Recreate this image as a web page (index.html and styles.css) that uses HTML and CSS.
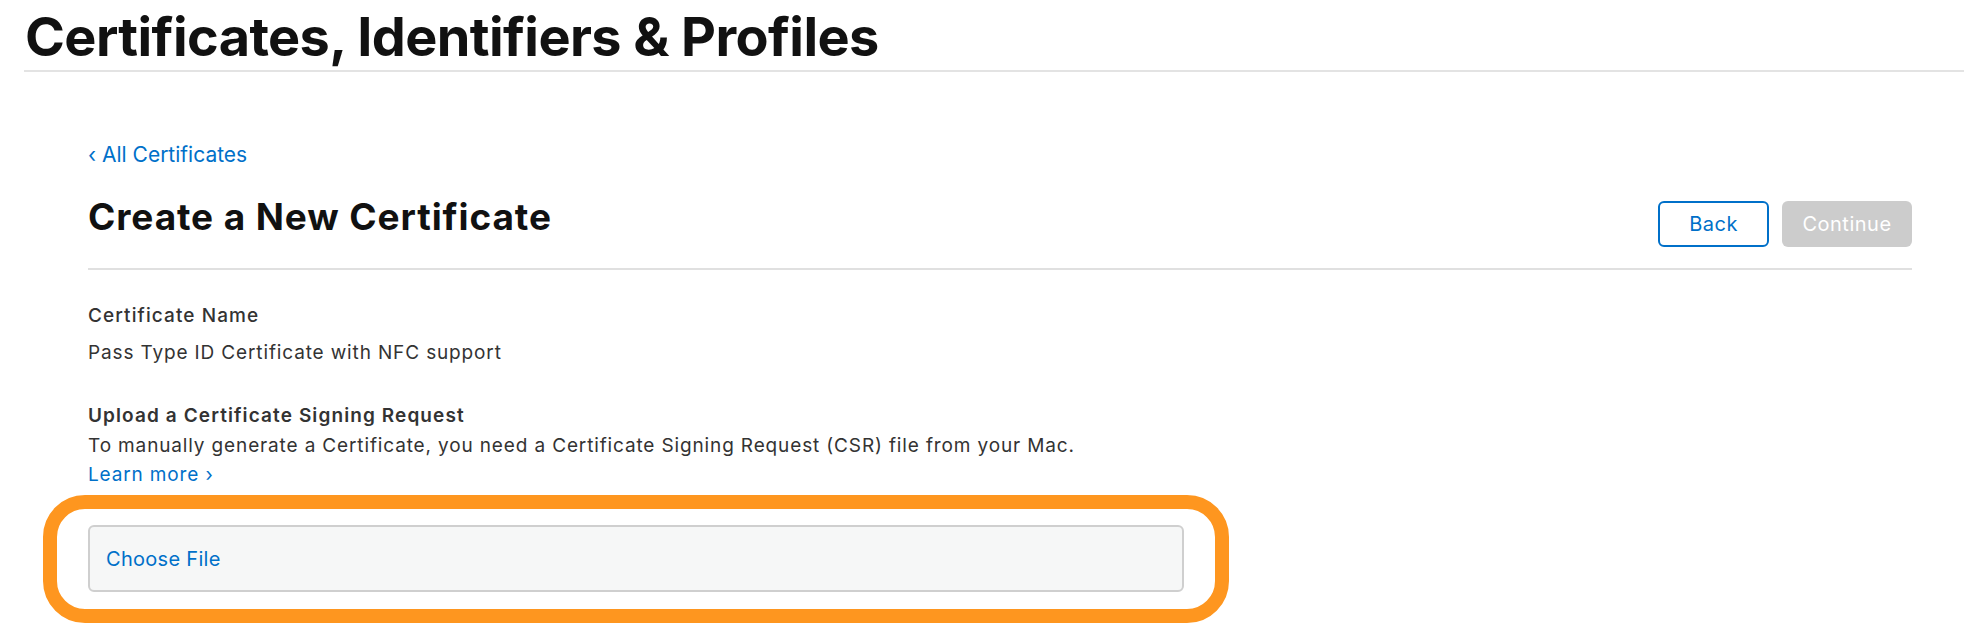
FILE: index.html
```html
<!DOCTYPE html>
<html lang="en">
<head>
<meta charset="utf-8">
<title>Certificates, Identifiers &amp; Profiles</title>
<link rel="stylesheet" href="styles.css">
</head>
<body>
<header class="page-header">
  <h1 class="page-title">Certificates, Identifiers &amp; Profiles</h1>
</header>
<main class="content">
  <a class="back-link" href="#"><span class="chev">‹</span> All Certificates</a>
  <div class="title-row">
    <h2 class="section-title">Create a New Certificate</h2>
    <div class="actions">
      <button class="btn btn-outline" type="button">Back</button>
      <button class="btn btn-disabled" type="button">Continue</button>
    </div>
  </div>
  <section class="field">
    <h3 class="label">Certificate Name</h3>
    <p class="value">Pass Type ID Certificate with NFC support</p>
  </section>
  <section class="field upload">
    <h3 class="label label-bold">Upload a Certificate Signing Request</h3>
    <p class="desc">To manually generate a Certificate, you need a Certificate Signing Request (CSR) file from your Mac.<br><a class="link" href="#">Learn more ›</a></p>
    <div class="highlight">
      <div class="file-input"><span class="choose">Choose File</span></div>
    </div>
  </section>
</main>
</body>
</html>
```

FILE: styles.css
```css
* { box-sizing: border-box; }
html, body { margin: 0; padding: 0; background: #fff; }
body {
  font-family: Inter, "Noto Sans", "Liberation Sans", sans-serif;
  color: #333;
  overflow: hidden;
}
.page-header {
  padding-left: 24px;
}
.page-title {
  margin: 0;
  padding: 5px 0 1px 1px;
  font-size: 54px;
  line-height: 64px;
  font-weight: 700;
  color: #111;
  letter-spacing: -0.6px;
  border-bottom: 2px solid #e3e3e3;
}
.content {
  padding: 0 52px 0 88px;
  display: flex;
  flex-direction: column;
  align-items: flex-start;
}
.back-link {
  margin-top: 71px;
  font-size: 21px;
  line-height: 24px;
  color: #0070c9;
  text-decoration: none;
}
.title-row {
  align-self: stretch;
  margin-top: 28px;
  display: flex;
  justify-content: space-between;
  align-items: flex-start;
  padding-bottom: 21px;
  border-bottom: 2px solid #e0e0e0;
}
.section-title {
  margin: 0;
  font-size: 37px;
  line-height: 44px;
  font-weight: 700;
  color: #111;
  letter-spacing: 0.9px;
}
.actions {
  margin-top: 6px;
  display: flex;
  gap: 13px;
}
.btn {
  height: 46px;
  border-radius: 6px;
  font-family: Inter, "Noto Sans", sans-serif;
  font-size: 20px;
  letter-spacing: 0.5px;
  padding: 0;
}
.btn-outline {
  width: 111px;
  background: #fff;
  border: 2px solid #0070c9;
  color: #0070c9;
}
.btn-disabled {
  width: 130px;
  background: #cccccc;
  border: none;
  color: #fff;
}
.field { align-self: stretch; }
.field:first-of-type { margin-top: 31px; }
.label {
  margin: 0;
  font-size: 19px;
  line-height: 29px;
  font-weight: 500;
  color: #333;
  letter-spacing: 1.1px;
}
.label-bold {
  font-weight: 600;
  letter-spacing: 1.1px;
}
.value {
  margin: 8px 0 0;
  font-size: 19px;
  line-height: 29px;
  color: #333;
  letter-spacing: 0.86px;
}
.upload { margin-top: 34px; }
.desc {
  margin: 1px 0 0;
  font-size: 19px;
  line-height: 29px;
  color: #333;
  letter-spacing: 0.86px;
}
.link { color: #0070c9; text-decoration: none; }
.highlight {
  margin: 6px 0 0 -45px;
  width: 1186px;
  border: 14px solid #fe961f;
  border-radius: 42px;
  padding: 16px 31px 17px;
}
.file-input {
  height: 67px;
  border: 2px solid #cfcfcf;
  border-radius: 6px;
  background: #f6f7f7;
  display: flex;
  align-items: center;
  padding-left: 16px;
}
.choose {
  font-size: 20px;
  letter-spacing: 0.3px;
  color: #0070c9;
}
```
